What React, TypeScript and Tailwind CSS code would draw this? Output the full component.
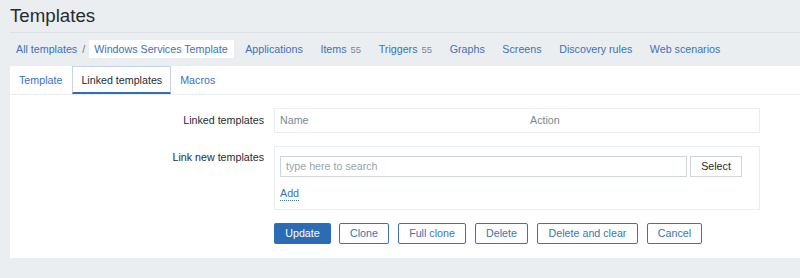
const navLinks = [
  { label: "Applications" },
  { label: "Items", count: "55" },
  { label: "Triggers", count: "55" },
  { label: "Graphs" },
  { label: "Screens" },
  { label: "Discovery rules" },
  { label: "Web scenarios" },
];

const actions = [
  { label: "Clone", w: "w-[50px]" },
  { label: "Full clone", w: "w-[68px]" },
  { label: "Delete", w: "w-[53px]" },
  { label: "Delete and clear", w: "w-[101px]" },
  { label: "Cancel", w: "w-[55px]" },
];

const App = () => {
  return (
    <div className="h-[278px] w-[800px] overflow-hidden bg-[#ebeef0] font-['Liberation_Sans',Arial,sans-serif] text-[10.7px] text-[#1f2c33]">
      {/* header */}
      <div className="ml-[10px] h-[33px] border-b border-[#dfe2e5]">
        <h1 className="pt-[5px] text-[18.7px] leading-[22px] text-[#1f2c33]">Templates</h1>
      </div>

      {/* breadcrumbs + host nav */}
      <div className="ml-[10px] flex h-[33px] items-start pt-[7px] leading-[18px]">
        <a className="pl-[6px] text-[#3b72b8]">All templates</a>
        <span className="ml-[5px] text-[#6b7780]">/</span>
        <span className="ml-[4px] h-[18px] w-[145px] bg-white pl-[5px] text-[#3b72b8]">
          Windows Services Template
        </span>
        <div className="ml-[11px] flex gap-[17.6px]">
          {navLinks.map((l) => (
            <a key={l.label} className="text-[#3b72b8]">
              {l.label}
              {l.count && <span className="ml-[4px] text-[9.5px] text-[#7b8790]">{l.count}</span>}
            </a>
          ))}
        </div>
      </div>

      {/* panel */}
      <div className="ml-[10px] h-[192px] bg-white">
        <div className="flex h-[29px] border-b border-[#ebeef0]">
          <a className="h-[28px] px-[9px] pt-[6px] text-[#3b72b8]">Template</a>
          <a className="ml-[1px] h-[28px] border border-b-2 border-[#c4d3ea] border-b-[#2e6dbb] px-[8px] pt-[5px] text-[#1f2c33]">
            Linked templates
          </a>
          <a className="h-[28px] px-[9px] pt-[6px] text-[#3b72b8]">Macros</a>
        </div>

        <div className="pt-[13px]">
          {/* linked templates */}
          <div className="flex">
            <div className="w-[254px] pt-[4px] text-right">Linked templates</div>
            <div className="ml-[10px] flex h-[25px] w-[486px] items-center border border-[#ebeef0] pl-[5px] text-[#7a8892]">
              <span className="w-[250px]">Name</span>
              <span>Action</span>
            </div>
          </div>

          {/* link new templates */}
          <div className="mt-[13px] flex">
            <div className="w-[254px] pt-[3px] text-right">Link new templates</div>
            <div className="ml-[10px] h-[64px] w-[486px] border border-[#ebeef0] pl-[5px] pt-[9px]">
              <div className="flex gap-[3px]">
                <div className="flex h-[21px] w-[407px] items-center border border-[#cfd5da] pl-[5px] text-[#9aa3aa]">
                  type here to search
                </div>
                <button className="h-[21px] w-[52px] border border-[#cfd5da] bg-white text-[#1f2c33]">Select</button>
              </div>
              <a className="mt-[10px] inline-block border-b border-dotted border-[#3b72b8] leading-[13px] text-[#3b72b8]">
                Add
              </a>
            </div>
          </div>

          {/* buttons */}
          <div className="ml-[264px] mt-[13px] flex gap-[9px]">
            <button className="mr-[-1px] h-[21px] w-[57px] rounded-[2px] bg-[#2b6cb4] text-white">Update</button>
            {actions.map((a) => (
              <button
                key={a.label}
                className={`h-[21px] ${a.w} rounded-[2px] border border-[#3b72b8] bg-white text-[#3b72b8]`}
              >
                {a.label}
              </button>
            ))}
          </div>
        </div>
      </div>
    </div>
  );
};

export default App;
